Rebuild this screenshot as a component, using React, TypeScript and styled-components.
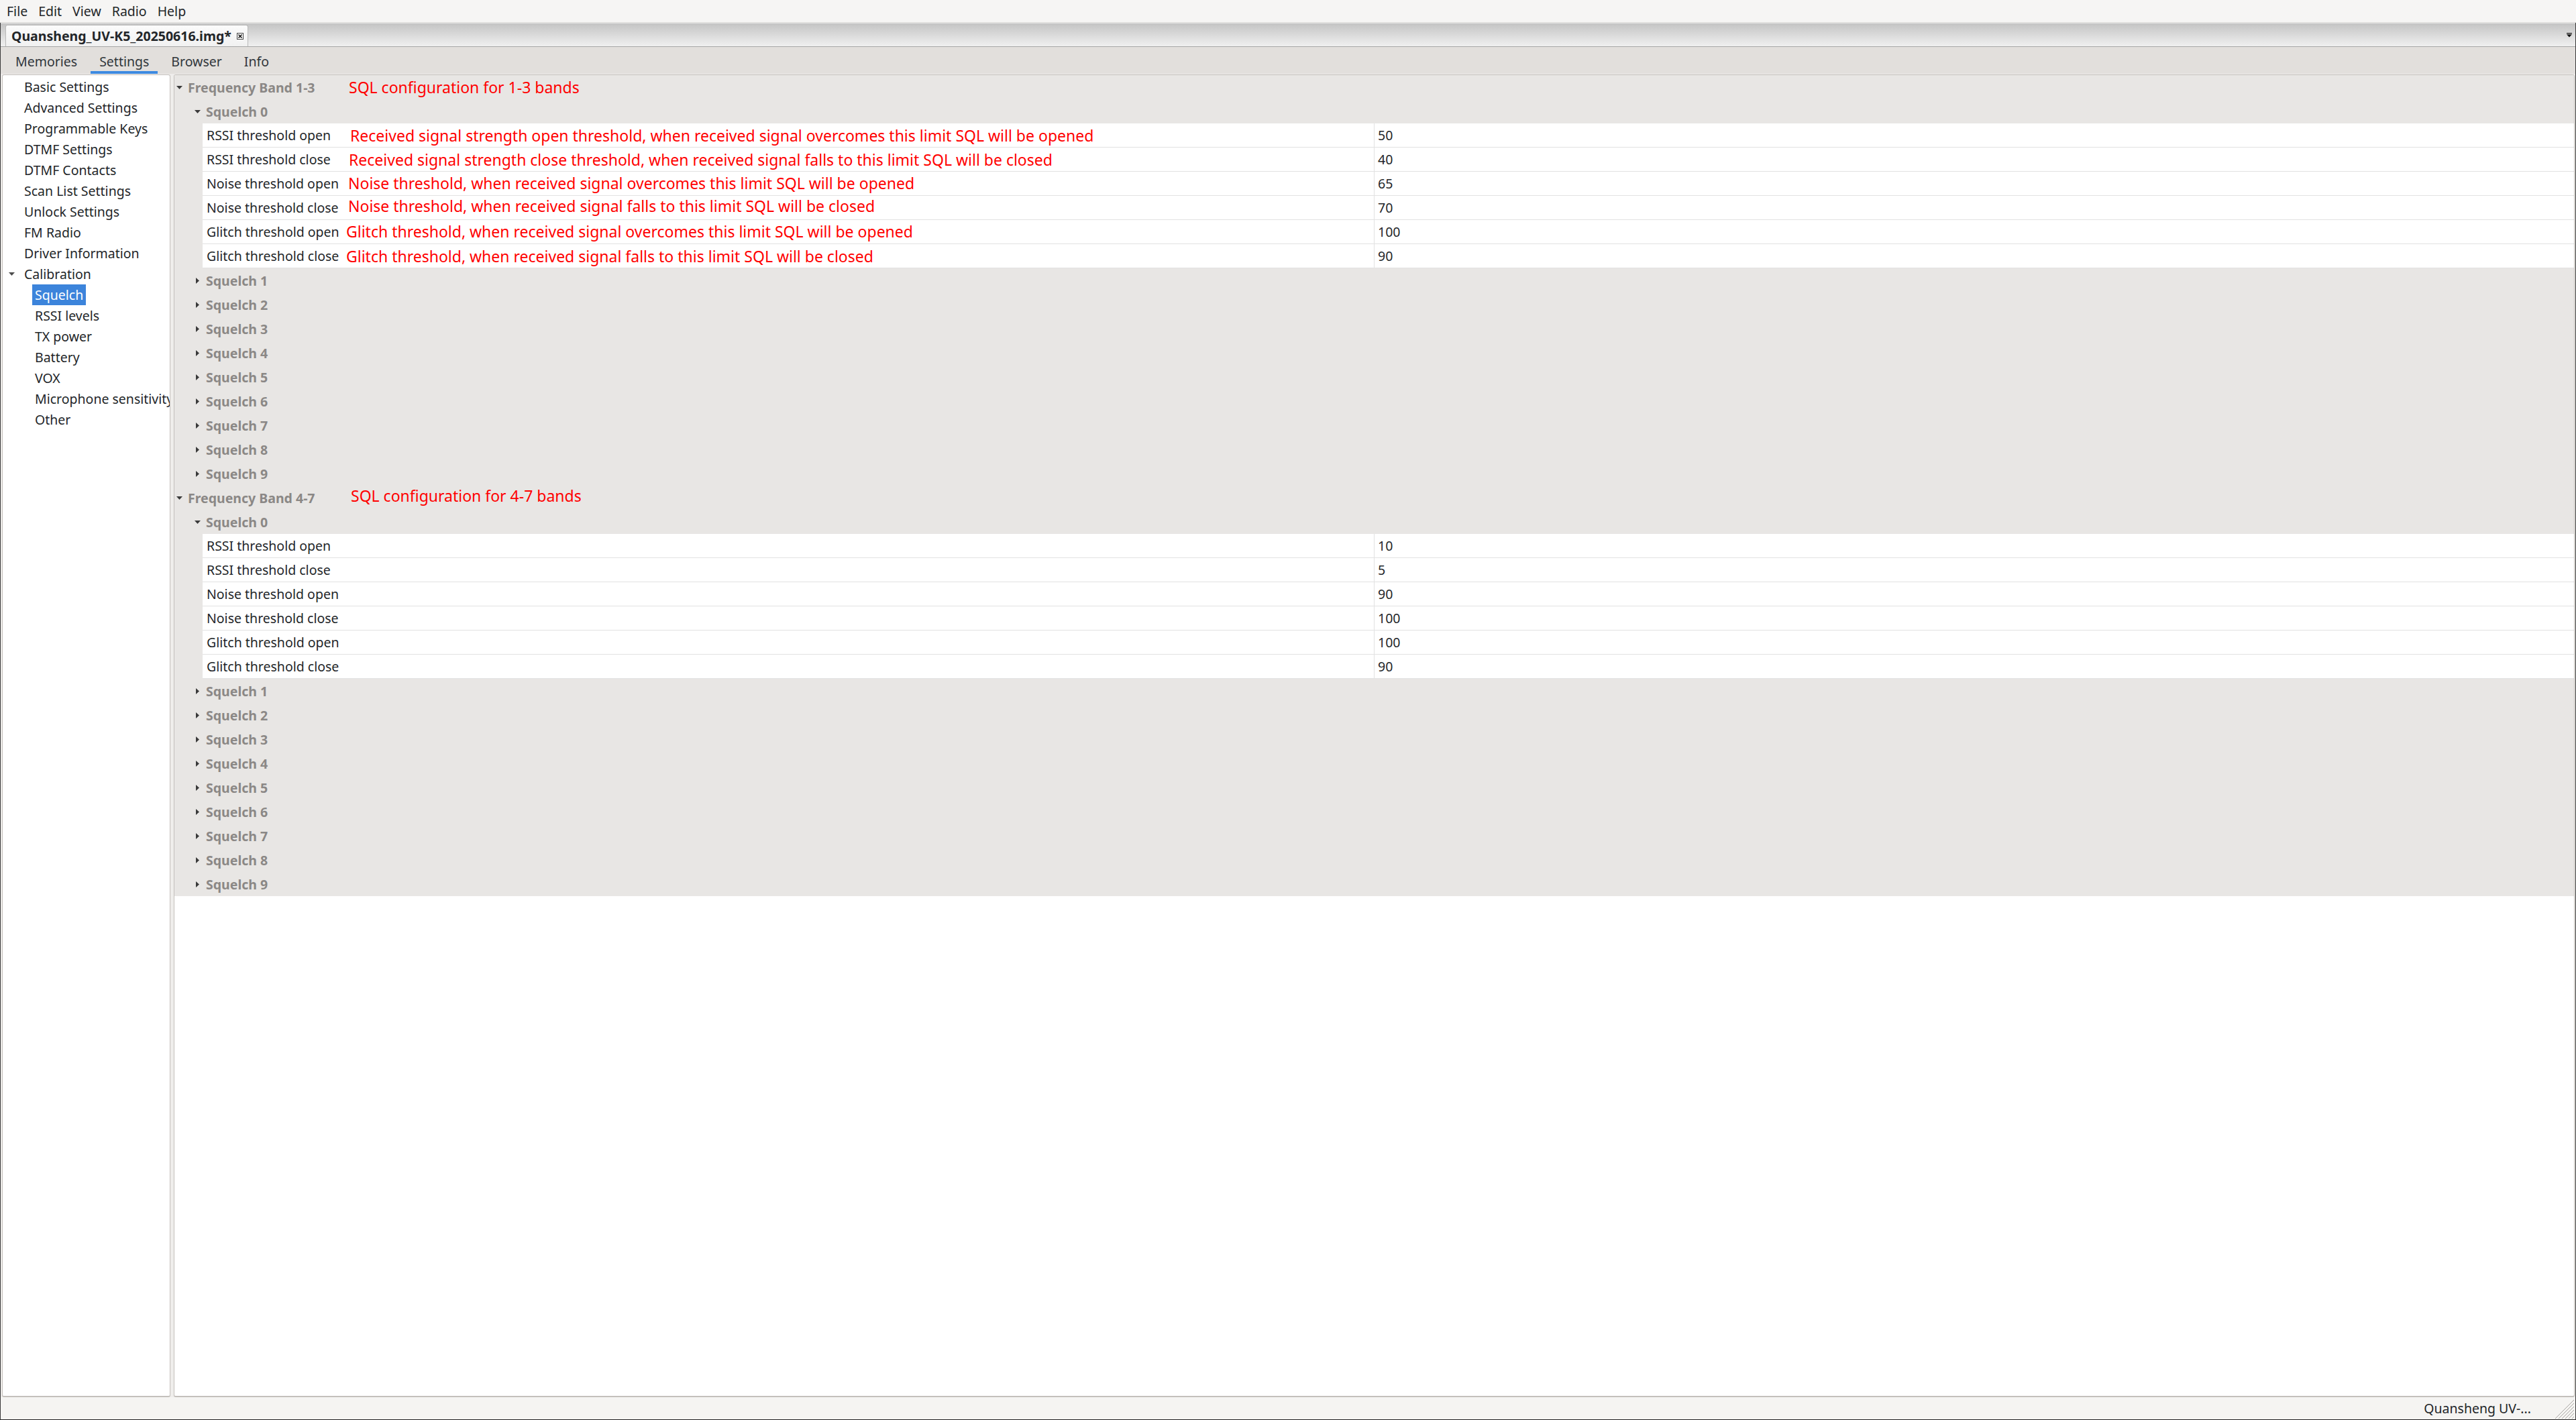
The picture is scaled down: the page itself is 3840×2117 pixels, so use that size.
import React from "react";
import styled, { createGlobalStyle } from "styled-components";

const GlobalStyle = createGlobalStyle`
  html, body { margin: 0; padding: 0; height: 100%; overflow: hidden; }
  body { font-family: "Noto Sans", "Open Sans", sans-serif; font-size: 19.5px; color: #232629; background: #f6f5f4; }
  #root { height: 100%; }
`;

const Window = styled.div`
  display: flex;
  flex-direction: column;
  height: 100vh;
  box-sizing: border-box;
`;

const MenuBar = styled.div`
  display: flex;
  align-items: center;
  height: 33px;
  padding-left: 2px;
  background: #f6f5f4;
  border-bottom: 1px solid #dedcd9;
`;

const MenuItem = styled.span`
  padding: 0 8px;
  line-height: 33px;
  color: #232629;
`;

const Frame = styled.div`
  flex: 1;
  display: flex;
  flex-direction: column;
  min-height: 0;
  border-left: 1px solid #3a3a3a;
  border-right: 1px solid #3a3a3a;
  border-bottom: 1px solid #1f1f1f;
`;

const DocTabBar = styled.div`
  display: flex;
  align-items: flex-end;
  justify-content: space-between;
  height: 34px;
  background: linear-gradient(#c4c4c4, #f0f0f0);
  border-top: 1px solid #e4e4e4;
  border-bottom: 1px solid #a6a6a6;
  padding-left: 7px;
  padding-right: 5px;
`;

const DocTab = styled.div`
  display: flex;
  align-items: center;
  height: 32px;
  width: 362px;
  box-sizing: border-box;
  padding-left: 8px;
  gap: 8px;
  background: linear-gradient(#fbfbfb, #f1f1f1);
  border: 1px solid #b9b9b9;
  border-bottom: none;
  border-radius: 3px 3px 0 0;
  font-weight: 700;
  color: #232629;
`;

const DropArrow = styled.div`
  align-self: center;
  display: flex;
`;

const InnerTabBar = styled.div`
  display: flex;
  gap: 7px;
  height: 40px;
  padding-left: 9px;
  background: #e2dfdc;
`;

const InnerTab = styled.div<{ $active?: boolean }>`
  display: flex;
  align-items: center;
  padding: 0 13px;
  box-sizing: border-box;
  padding-top: 7px;
  border-bottom: 4px solid ${(p) => (p.$active ? "#3d8ae0" : "transparent")};
  color: #31363b;
`;

const Main = styled.div`
  flex: 1;
  min-height: 0;
  display: flex;
  gap: 5px;
  padding: 1px 1px 0 2px;
  background: #efedeb;
`;

const Panel = styled.div<{ $width?: number }>`
  ${(p) => (p.$width ? `width: ${p.$width}px; flex-shrink: 0;` : "flex: 1; min-width: 0;")}
  box-sizing: border-box;
  background: #ffffff;
  border: 1px solid #c4c0bc;
  border-bottom-width: 2px;
  border-radius: 3px;
  overflow: hidden;
`;

const NavList = styled.div`
  display: flex;
  flex-direction: column;
  padding-top: 2px;
`;

const NavItem = styled.div<{ $level: number }>`
  display: flex;
  align-items: center;
  height: 31px;
  padding-left: ${(p) => (p.$level === 0 ? 9 : 44)}px;
  white-space: nowrap;
  color: #232629;
`;

const NavArrowSlot = styled.span`
  display: inline-flex;
  justify-content: center;
  width: 9px;
  margin-right: 10px;
`;

const NavText = styled.span<{ $selected?: boolean }>`
  padding: 0 4px;
  line-height: 31px;
  background: ${(p) => (p.$selected ? "#3c84db" : "transparent")};
  color: ${(p) => (p.$selected ? "#ffffff" : "#232629")};
`;

const Tree = styled.div`
  display: flex;
  flex-direction: column;
`;

const GroupRow = styled.div<{ $level: number }>`
  display: flex;
  align-items: center;
  height: 36px;
  background: #e8e6e4;
  padding-left: ${(p) => (p.$level === 0 ? 3 : 30)}px;
`;

const TitleBox = styled.div<{ $width: number }>`
  display: flex;
  align-items: center;
  gap: 8px;
  width: ${(p) => p.$width}px;
  flex-shrink: 0;
  font-weight: 700;
  color: #8b8886;
  white-space: nowrap;
`;

const ArrowSlot = styled.span`
  display: inline-flex;
  justify-content: center;
  align-items: center;
  width: 9px;
`;

const Note = styled.span<{ $shift: number; $dy?: number }>`
  margin-left: ${(p) => p.$shift}px;
  margin-bottom: ${(p) => (p.$dy ?? 0) * 2}px;
  font-size: 23px;
  color: #ff0000;
  white-space: nowrap;
`;

const LeafWrap = styled.div`
  display: flex;
  flex-direction: column;
  background: #e8e6e4;
  padding-left: 42px;
`;

const LeafRow = styled.div`
  display: flex;
  height: 36px;
  box-sizing: border-box;
  background: #ffffff;
  border-bottom: 1px solid #e2e2e2;
`;

const LabelCell = styled.div`
  display: flex;
  align-items: center;
  width: 1746px;
  flex-shrink: 0;
  box-sizing: border-box;
  padding-left: 6px;
  white-space: nowrap;
`;

const Label = styled.span`
  width: 208px;
  flex-shrink: 0;
  color: #232629;
`;

const ValueCell = styled.div`
  display: flex;
  align-items: center;
  flex: 1;
  padding-left: 5px;
  border-left: 1px solid #e2e2e2;
  color: #232629;
`;

const StatusBar = styled.div`
  display: flex;
  align-items: center;
  justify-content: flex-end;
  height: 33px;
  background: #f5f4f2;
  padding-right: 2px;
  gap: 36px;
  color: #232629;
`;

const Grip = styled.div`
  display: flex;
  align-self: flex-end;
  margin-bottom: 1px;
`;

const Down = ({ color = "#3a3a3a" }: { color?: string }) => (
  <svg width="9" height="5" viewBox="0 0 9 5">
    <path d="M0 0H9L4.5 5Z" fill={color} />
  </svg>
);

const Right = ({ color = "#3a3a3a" }: { color?: string }) => (
  <svg width="5" height="9" viewBox="0 0 5 9">
    <path d="M0 0L5 4.5L0 9Z" fill={color} />
  </svg>
);

type Param = { label: string; value: string; note?: string; shift?: number; dy?: number };

type Band = { title: string; note: string; noteShift: number; noteDy?: number; params: Param[] };

const bands: Band[] = [
  {
    title: "Frequency Band 1-3",
    note: "SQL configuration for 1-3 bands",
    noteShift: 0,
    params: [
      { label: "RSSI threshold open", value: "50", note: "Received signal strength open threshold, when received signal overcomes this limit SQL will be opened", shift: 6 },
      { label: "RSSI threshold close", value: "40", note: "Received signal strength close threshold, when received signal falls to this limit SQL will be closed", shift: 4 },
      { label: "Noise threshold open", value: "65", note: "Noise threshold, when received signal overcomes this limit SQL will be opened", shift: 3, dy: 1 },
      { label: "Noise threshold close", value: "70", note: "Noise threshold, when received signal falls to this limit SQL will be closed", shift: 3, dy: 3 },
      { label: "Glitch threshold open", value: "100", note: "Glitch threshold, when received signal overcomes this limit SQL will be opened", shift: 0, dy: 1 },
      { label: "Glitch threshold close", value: "90", note: "Glitch threshold, when received signal falls to this limit SQL will be closed", shift: 0 },
    ],
  },
  {
    title: "Frequency Band 4-7",
    note: "SQL configuration for 4-7 bands",
    noteShift: 3,
    noteDy: 3,
    params: [
      { label: "RSSI threshold open", value: "10" },
      { label: "RSSI threshold close", value: "5" },
      { label: "Noise threshold open", value: "90" },
      { label: "Noise threshold close", value: "100" },
      { label: "Glitch threshold open", value: "100" },
      { label: "Glitch threshold close", value: "90" },
    ],
  },
];

const navTop = [
  "Basic Settings",
  "Advanced Settings",
  "Programmable Keys",
  "DTMF Settings",
  "DTMF Contacts",
  "Scan List Settings",
  "Unlock Settings",
  "FM Radio",
  "Driver Information",
];

const navCal = ["Squelch", "RSSI levels", "TX power", "Battery", "VOX", "Microphone sensitivity", "Other"];

export default function App() {
  return (
    <Window>
      <GlobalStyle />
      <MenuBar>
        {["File", "Edit", "View", "Radio", "Help"].map((m) => (
          <MenuItem key={m}>{m}</MenuItem>
        ))}
      </MenuBar>
      <Frame>
        <DocTabBar>
          <DocTab>
            <span>Quansheng_UV-K5_20250616.img*</span>
            <svg width="10" height="10" viewBox="0 0 10 10">
              <rect x="0.5" y="0.5" width="9" height="9" fill="#fff" stroke="#444" />
              <path d="M2.5 2.5L7.5 7.5M7.5 2.5L2.5 7.5" stroke="#111" strokeWidth="1.6" />
            </svg>
          </DocTab>
          <DropArrow>
            <svg width="8" height="7" viewBox="0 0 8 7">
              <rect x="0" y="0" width="8" height="1.2" fill="#111" />
              <path d="M0 2.2H8L4 6.5Z" fill="#111" />
            </svg>
          </DropArrow>
        </DocTabBar>
        <InnerTabBar>
          <InnerTab>Memories</InnerTab>
          <InnerTab $active>Settings</InnerTab>
          <InnerTab>Browser</InnerTab>
          <InnerTab>Info</InnerTab>
        </InnerTabBar>
        <Main>
          <Panel $width={251}>
            <NavList>
              {navTop.map((n) => (
                <NavItem key={n} $level={0}>
                  <NavArrowSlot />
                  <NavText>{n}</NavText>
                </NavItem>
              ))}
              <NavItem $level={0}>
                <NavArrowSlot>
                  <Down color="#4d4d4d" />
                </NavArrowSlot>
                <NavText>Calibration</NavText>
              </NavItem>
              {navCal.map((n, i) => (
                <NavItem key={n} $level={1}>
                  <NavText $selected={i === 0}>{n}</NavText>
                </NavItem>
              ))}
            </NavList>
          </Panel>
          <Panel>
            <Tree>
              {bands.map((b) => (
                <React.Fragment key={b.title}>
                  <GroupRow $level={0}>
                    <TitleBox $width={257}>
                      <ArrowSlot>
                        <Down />
                      </ArrowSlot>
                      {b.title}
                    </TitleBox>
                    <Note $shift={b.noteShift} $dy={b.noteDy}>
                      {b.note}
                    </Note>
                  </GroupRow>
                  <GroupRow $level={1}>
                    <TitleBox $width={200}>
                      <ArrowSlot>
                        <Down />
                      </ArrowSlot>
                      Squelch 0
                    </TitleBox>
                  </GroupRow>
                  <LeafWrap>
                    {b.params.map((p) => (
                      <LeafRow key={p.label}>
                        <LabelCell>
                          <Label>{p.label}</Label>
                          {p.note && (
                            <Note $shift={p.shift ?? 0} $dy={p.dy}>
                              {p.note}
                            </Note>
                          )}
                        </LabelCell>
                        <ValueCell>{p.value}</ValueCell>
                      </LeafRow>
                    ))}
                  </LeafWrap>
                  {[1, 2, 3, 4, 5, 6, 7, 8, 9].map((n) => (
                    <GroupRow key={n} $level={1}>
                      <TitleBox $width={200}>
                        <ArrowSlot>
                          <Right />
                        </ArrowSlot>
                        Squelch {n}
                      </TitleBox>
                    </GroupRow>
                  ))}
                </React.Fragment>
              ))}
            </Tree>
          </Panel>
        </Main>
        <StatusBar>
          <span>Quansheng UV-...</span>
          <Grip>
            <svg width="28" height="28" viewBox="0 0 28 28">
              {[0, 5, 10, 15, 20, 25].map((o) => (
                <path key={o} d={`M${28 - o - 3} 28L28 ${28 - o - 3}`} stroke="#a9a6a3" strokeWidth="1" />
              ))}
            </svg>
          </Grip>
        </StatusBar>
      </Frame>
    </Window>
  );
}
